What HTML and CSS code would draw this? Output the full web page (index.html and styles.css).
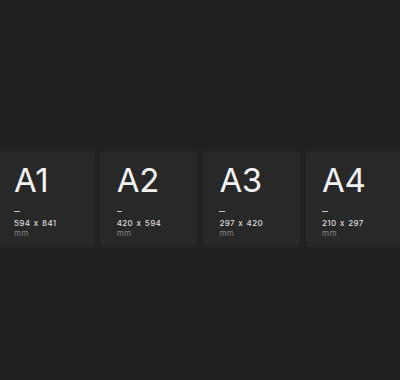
FILE: index.html
```html
<!DOCTYPE html>
<html lang="en">
<head>
    <meta charset="UTF-8">
    <title>Paper sizes</title>
    <link rel="stylesheet" href="styles.css">
</head>
<body>
    <div class="sizes">
        <div class="size-card">
            <div class="size-name">A1</div>
            <div class="size-dash"></div>
            <div class="size-dims">594 x 841</div>
            <div class="size-unit">mm</div>
        </div>
        <div class="size-card">
            <div class="size-name">A2</div>
            <div class="size-dash"></div>
            <div class="size-dims">420 x 594</div>
            <div class="size-unit">mm</div>
        </div>
        <div class="size-card">
            <div class="size-name">A3</div>
            <div class="size-dash"></div>
            <div class="size-dims">297 x 420</div>
            <div class="size-unit">mm</div>
        </div>
        <div class="size-card">
            <div class="size-name">A4</div>
            <div class="size-dash"></div>
            <div class="size-dims">210 x 297</div>
            <div class="size-unit">mm</div>
        </div>
    </div>
</body>
</html>
```

FILE: styles.css
```css
body {
    margin: 0;
    height: 380px;
    overflow: hidden;
    background: #212121;
    font-family: Inter, "Noto Sans", sans-serif;
    color: #f2f2f2;
}
.sizes {
    display: flex;
    gap: 5.7px;
    margin-left: -2.5px;
    padding-top: 151px;
}
.size-card {
    flex: 0 0 97px;
    height: 96px;
    box-sizing: border-box;
    padding: 13px 0 0 16.5px;
    background: #282828;
    border-radius: 4px;
}
.size-name {
    font-size: 33px;
    line-height: 1;
    letter-spacing: -0.3px;
}
.size-dash {
    width: 5.5px;
    height: 1px;
    margin-top: 14px;
    background: #c4c4c4;
}
.size-dims {
    margin-top: 6px;
    font-size: 8px;
    line-height: 10px;
    font-weight: 500;
    letter-spacing: 0.35px;
    word-spacing: 1px;
    color: #dcdcdc;
}
.size-unit {
    font-size: 8px;
    line-height: 10px;
    letter-spacing: 0.4px;
    color: #858585;
}
```
